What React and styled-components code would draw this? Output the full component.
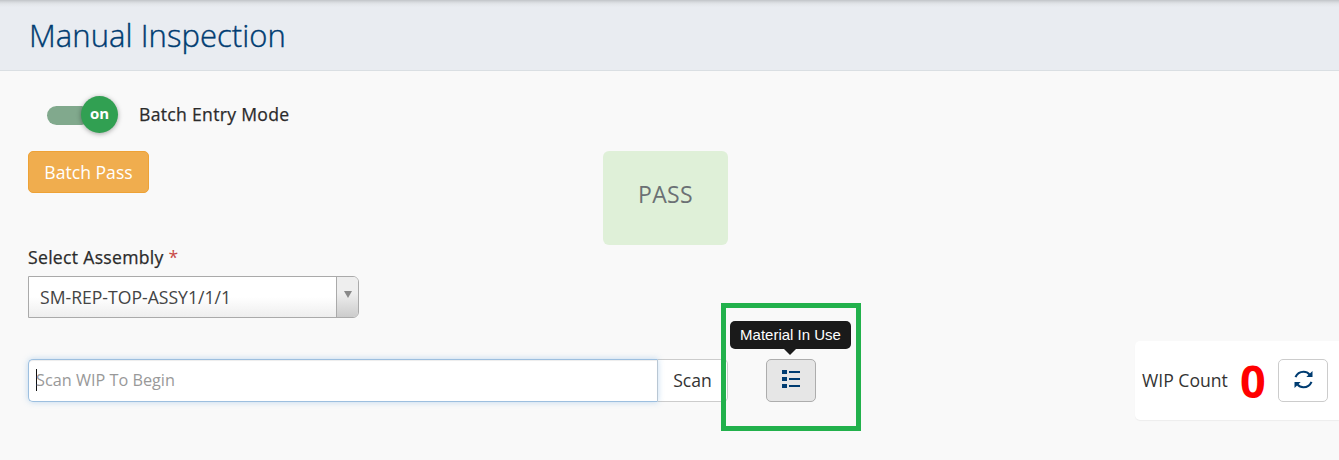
import React from "react";
import styled, { createGlobalStyle } from "styled-components";

const GlobalStyle = createGlobalStyle`
  * { box-sizing: border-box; }
  html, body { margin: 0; padding: 0; }
  body {
    background: #f9f9f9;
    color: #333;
    font-family: "Open Sans", "Noto Sans", sans-serif;
    font-size: 17.6px;
    overflow: hidden;
  }
`;

const Page = styled.div`
  width: 100%;
  height: 460px;
  overflow: hidden;
`;

const Header = styled.header`
  display: flex;
  align-items: center;
  height: 71px;
  padding: 0 0 0 29px;
  background: linear-gradient(#c1c4c8 0, #d5d8dc 2px, #e2e5e9 4px, #e9ecf1 7px);
  border-bottom: 1px solid #dadfe3;
`;

const Title = styled.h1`
  margin: 0;
  color: #003c71;
  font-size: 31px;
  font-weight: 300;
  line-height: 40px;
  letter-spacing: 0.06px;
  -webkit-text-stroke: 0.4px currentColor;
`;

const Content = styled.main`
  padding: 25px 0 0 28px;
`;

const ModeRow = styled.div`
  display: flex;
  align-items: center;
  height: 37px;
  padding-left: 19px;
  gap: 21px;
`;

const Toggle = styled.button`
  display: flex;
  align-items: center;
  width: 71px;
  height: 37px;
  padding: 0;
  border: 0;
  background: none;
  font-family: inherit;
`;

const ToggleTrack = styled.span`
  flex: 1;
  height: 19px;
  margin: 2px -10px 0 0;
  border-radius: 10px;
  background: #81a98d;
`;

const ToggleKnob = styled.span`
  z-index: 1;
  width: 37px;
  height: 37px;
  border-radius: 50%;
  background: #31a052;
  box-shadow: 0 1px 5px rgba(0, 0, 0, 0.35);
  color: #fff;
  font-size: 15px;
  font-weight: 700;
  line-height: 35px;
  text-align: center;
`;

const Label = styled.label`
  padding-bottom: 2px;
  color: #2b2b2b;
  font-size: 17.6px;
  line-height: 22px;
  letter-spacing: 0.3px;
  -webkit-text-stroke: 0.25px currentColor;
`;

const Required = styled.span`
  color: #c94a48;
  -webkit-text-stroke: 0;
`;

const StatusRow = styled.div`
  display: flex;
  align-items: flex-start;
  gap: 454px;
  height: 94px;
  margin-top: 18px;
`;

const BatchButton = styled.button`
  width: 121px;
  height: 42px;
  padding: 0;
  border: 1px solid #eea236;
  border-radius: 5px;
  background: #f0ad4e;
  color: #fff;
  font: 400 17.6px "Open Sans", sans-serif;
`;

const StatusBadge = styled.div`
  width: 125px;
  height: 94px;
  border-radius: 6px;
  background: #dff0d8;
  color: #6b7074;
  font-size: 23px;
  line-height: 87px;
  letter-spacing: 0.4px;
  text-align: center;
`;

const Field = styled.div`
  display: flex;
  flex-direction: column;
  margin-top: 1px;
`;

const Select = styled.div`
  display: flex;
  width: 331px;
  height: 42px;
  margin-top: 6px;
  border: 1px solid #aaa;
  border-radius: 0 6px 6px 0;
  background: linear-gradient(#fff 50%, #eee 100%);
  overflow: hidden;
`;

const SelectValue = styled.span`
  flex: 1;
  padding-left: 11px;
  color: #444;
  line-height: 40px;
`;

const SelectArrow = styled.span`
  display: flex;
  justify-content: center;
  width: 22px;
  padding-top: 14px;
  border-left: 1px solid #aaa;
  background: linear-gradient(#eee 40%, #ccc);
`;

const ScanRow = styled.div`
  display: flex;
  align-items: center;
  height: 79px;
  margin-top: 23px;
`;

const ScanInput = styled.div`
  z-index: 1;
  display: flex;
  align-items: center;
  width: 630px;
  height: 43px;
  padding: 0 0 2px 8px;
  border: 1px solid #9dbfdf;
  border-right-color: #b9c7d4;
  border-radius: 5px 0 0 5px;
  background: #fff;
  box-shadow: inset 0 1px 1px rgba(0, 0, 0, 0.075), 0 0 6px rgba(120, 175, 225, 0.45);
  color: #999;
  font-size: 16.25px;
`;

const Caret = styled.span`
  width: 1px;
  height: 22px;
  margin: 0 -1px 0 -1px;
  background: #111;
`;

const ScanButton = styled.button`
  width: 70px;
  height: 43px;
  padding: 0 0 2px;
  border: 1px solid #ccc;
  border-left: 0;
  border-radius: 0 5px 5px 0;
  background: #fff;
  color: #333;
  font: 400 17.6px "Open Sans", sans-serif;
`;

const MaterialAction = styled.div`
  position: relative;
  width: 50px;
  height: 43px;
  margin-left: 38px;
`;

const Highlight = styled.div`
  position: absolute;
  z-index: 2;
  top: -56px;
  left: -45px;
  width: 140px;
  height: 128px;
  border: 5px solid #22b14c;
  pointer-events: none;
`;

const Tooltip = styled.div`
  position: absolute;
  z-index: 3;
  top: -38px;
  left: -36px;
  width: 121px;
  height: 28px;
  border-radius: 5px;
  background: #1a1a1a;
  color: #fff;
  font: 15px/28px "Liberation Sans", Arial, sans-serif;
  text-align: center;
  white-space: nowrap;

  &::after {
    content: "";
    position: absolute;
    top: 28px;
    left: 54px;
    border: 6px solid transparent;
    border-top-color: #1a1a1a;
    border-bottom: 0;
  }
`;

const IconButton = styled.button`
  display: flex;
  align-items: center;
  justify-content: center;
  width: 50px;
  height: 43px;
  padding: 0 0 ${(p) => (p.$active ? "3px" : "2px")};
  border: 1px solid ${(p) => (p.$active ? "#adadad" : "#ccc")};
  border-radius: 5px;
  background: ${(p) => (p.$active ? "#e6e6e6" : "#fff")};
  color: #003c71;
`;

const CountPanel = styled.section`
  display: flex;
  align-items: center;
  width: 204px;
  height: 79px;
  margin-left: auto;
  padding: 0 11px 0 7px;
  border-radius: 5px 0 0 5px;
  background: #fff;
  box-shadow: 0 1px 1px rgba(0, 0, 0, 0.05);
`;

const CountLabel = styled.span`
  width: 98px;
  padding-bottom: 2px;
  white-space: nowrap;
`;

const CountValue = styled.strong`
  width: 38px;
  color: #f00;
  font-size: 45px;
  font-weight: 700;
  line-height: 60px;
`;

const ListIcon = () => (
  <svg width="18" height="18" viewBox="0 0 18 18" fill="currentColor" shapeRendering="crispEdges">
    <path d="M0 0h5v4H0zM0 7h5v4H0zM0 14h5v4H0zM7 1h11v2H7zM7 8h11v2H7zM7 15h11v2H7z" />
  </svg>
);

const RefreshIcon = () => (
  <svg width="19" height="19" viewBox="0 0 19 19" fill="none" stroke="currentColor" strokeWidth="2.1">
    <path d="M1.5 7.2C3 3.6 6 1.8 9.6 1.8c2.6 0 4.5 1 6 2.8M17.5 11.8c-1.5 3.6-4.5 5.4-8.1 5.4-2.6 0-4.5-1-6-2.8" />
    <path d="M18.5 1v6H12.3zM.5 18v-6H6.7z" fill="currentColor" stroke="none" />
  </svg>
);

export default function App() {
  return (
    <>
      <GlobalStyle />
      <Page>
        <Header>
          <Title>Manual Inspection</Title>
        </Header>
        <Content>
          <ModeRow>
            <Toggle aria-pressed="true">
              <ToggleTrack />
              <ToggleKnob>on</ToggleKnob>
            </Toggle>
            <Label>Batch Entry Mode</Label>
          </ModeRow>
          <StatusRow>
            <BatchButton>Batch Pass</BatchButton>
            <StatusBadge>PASS</StatusBadge>
          </StatusRow>
          <Field>
            <Label>
              Select Assembly <Required>*</Required>
            </Label>
            <Select>
              <SelectValue>SM-REP-TOP-ASSY1/1/1</SelectValue>
              <SelectArrow>
                <svg width="8" height="7" viewBox="0 0 8 7" fill="#888">
                  <path d="M0 0h8L4 7z" />
                </svg>
              </SelectArrow>
            </Select>
          </Field>
          <ScanRow>
            <ScanInput>
              <Caret />
              Scan WIP To Begin
            </ScanInput>
            <ScanButton>Scan</ScanButton>
            <MaterialAction>
              <IconButton $active aria-label="Material In Use">
                <ListIcon />
              </IconButton>
              <Highlight />
              <Tooltip>Material In Use</Tooltip>
            </MaterialAction>
            <CountPanel>
              <CountLabel>WIP Count</CountLabel>
              <CountValue>0</CountValue>
              <IconButton aria-label="Refresh">
                <RefreshIcon />
              </IconButton>
            </CountPanel>
          </ScanRow>
        </Content>
      </Page>
    </>
  );
}
